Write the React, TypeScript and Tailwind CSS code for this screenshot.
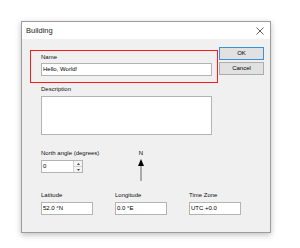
import React from "react"

const font = { fontFamily: '"Liberation Sans", Arial, sans-serif' }

function Label({ children }: { children: React.ReactNode }) {
    return <div className="h-[7px] text-[6px] leading-[7px] text-[#111] whitespace-nowrap">{children}</div>
}

function Field({ value, className }: { value: string; className?: string }) {
    return (
        <div className={"h-[13px] bg-white border border-[#b4b4b4] px-[1px] text-[6px] leading-[11px] text-black " + (className || "")}>
            {value}
        </div>
    )
}

function Button({ label, primary }: { label: string; primary?: boolean }) {
    return (
        <div
            className={
                "h-[13px] w-[45px] flex items-center justify-center text-[6px] bg-[#e1e1e1] border " +
                (primary ? "border-[#3c8fd9]" : "border-[#adadad]")
            }
        >
            {label}
        </div>
    )
}

export default function App() {
    return (
        <div className="w-[300px] h-[248px] bg-white pt-[21px] pl-[21px]" style={font}>
            <div className="relative w-[250px] h-[212px] flex flex-col bg-[#f0f0f0] border border-[#9c9c9c] shadow-[0_2px_6px_rgba(0,0,0,0.25)]">
                {/* title bar */}
                <div className="h-[17px] bg-white flex items-center justify-between pl-[4px] pr-[6px]">
                    <span className="text-[7.5px] text-[#222]">Building</span>
                    <svg width="8" height="8" viewBox="0 0 8 8">
                        <path d="M0.5 0.5 L7.5 7.5 M7.5 0.5 L0.5 7.5" stroke="#333" strokeWidth="0.8" />
                    </svg>
                </div>

                {/* body */}
                <div className="flex flex-col pl-[19px]">
                    <div className="flex gap-[7px] pt-[8px]">
                        <div className="w-[171px] flex flex-col pt-[7px]">
                            <Label>Name</Label>
                            <Field value="Hello, World!" className="mt-[2px]" />
                            <div className="mt-[10px]">
                                <Label>Description</Label>
                            </div>
                            <div className="mt-[3px] h-[39px] bg-white border border-[#b4b4b4]" />
                        </div>
                        <div className="flex flex-col gap-[2px]">
                            <Button label="OK" primary />
                            <Button label="Cancel" />
                        </div>
                    </div>

                    <div className="grid grid-cols-[52px_52px_52px] gap-x-[22px] mt-[15px]">
                        <div className="flex flex-col">
                            <Label>North angle (degrees)</Label>
                            <div className="mt-[3px] w-[42px] h-[13px] flex bg-white border border-[#b4b4b4]">
                                <div className="flex-1 text-[6px] leading-[11px] px-[1px]">0</div>
                                <div className="w-[9px] flex flex-col border-l border-[#d0d0d0]">
                                    <div className="flex-1 flex items-center justify-center bg-[#f4f4f4] border-b border-[#d0d0d0]">
                                        <svg width="3" height="2" viewBox="0 0 3 2"><path d="M0 2 L1.5 0 L3 2 Z" fill="#444" /></svg>
                                    </div>
                                    <div className="flex-1 flex items-center justify-center bg-[#f4f4f4]">
                                        <svg width="3" height="2" viewBox="0 0 3 2"><path d="M0 0 L1.5 2 L3 0 Z" fill="#444" /></svg>
                                    </div>
                                </div>
                            </div>
                        </div>
                        <div className="flex flex-col items-center">
                            <div className="text-[6px] leading-[7px]">N</div>
                            <svg width="8" height="24" viewBox="0 0 8 24" className="mt-[2px]">
                                <path d="M4 0 L7 7 L1 7 Z" fill="#000" />
                                <path d="M4 7 L4 22" stroke="#666" strokeWidth="1" />
                            </svg>
                        </div>
                        <div />
                    </div>

                    <div className="grid grid-cols-[52px_52px_52px] gap-x-[22px] mt-[9px]">
                        <div className="flex flex-col">
                            <Label>Latitude</Label>
                            <Field value="52.0 °N" className="mt-[3px]" />
                        </div>
                        <div className="flex flex-col">
                            <Label>Longitude</Label>
                            <Field value="0.0 °E" className="mt-[3px]" />
                        </div>
                        <div className="flex flex-col">
                            <Label>Time Zone</Label>
                            <Field value="UTC +0.0" className="mt-[3px]" />
                        </div>
                    </div>
                </div>

                {/* highlight annotation */}
                <div className="absolute left-[8px] top-[28px] w-[188px] h-[33px] border-[1.5px] border-[#ff1a1a]" />
            </div>
        </div>
    )
}
